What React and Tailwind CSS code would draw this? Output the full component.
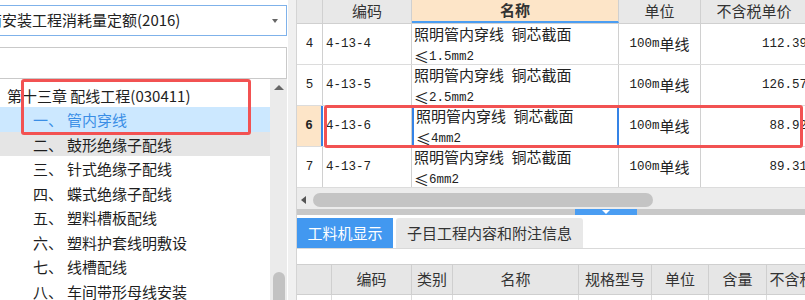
import React from 'react';

const sans = "font-['Noto_Sans_CJK_SC','Noto_Sans',sans-serif]";
const mono = "font-['Liberation_Mono','Noto_Sans_CJK_SC',monospace] text-[12.5px]";

const treeItems = [
    ['二、', '鼓形绝缘子配线'],
    ['三、', '针式绝缘子配线'],
    ['四、', '蝶式绝缘子配线'],
    ['五、', '塑料槽板配线'],
    ['六、', '塑料护套线明敷设'],
    ['七、', '线槽配线'],
    ['八、', '车间带形母线安装'],
];

const rows = [
    { no: '4', code: '4-13-4', spec: '1.5mm2', price: '112.39' },
    { no: '5', code: '4-13-5', spec: '2.5mm2', price: '126.57' },
    { no: '6', code: '4-13-6', spec: '4mm2', price: '88.92', active: true },
    { no: '7', code: '4-13-7', spec: '6mm2', price: '89.31' },
];

const subCols = [
    { w: 'w-[35px]', t: '' },
    { w: 'w-[80px]', t: '编码' },
    { w: 'w-[41px]', t: '类别' },
    { w: 'w-[126px]', t: '名称' },
    { w: 'w-[73px]', t: '规格型号' },
    { w: 'w-[57px]', t: '单位' },
    { w: 'w-[58px]', t: '含量' },
    { w: 'w-[81px]', t: '不含税单价' },
];

function TreePanel() {
    return (
        <div className="relative flex w-[288px] shrink-0 flex-col bg-white pt-[5px]">
            {/* 定额库选择 */}
            <div className="flex h-[31px] w-[287px] items-center justify-between border border-l-0 border-[#7fb2ea] text-[15px] text-[#222]">
                <span className="ml-[-13px] whitespace-nowrap">南安装工程消耗量定额(2016)</span>
                <span className="mr-[8px] h-0 w-0 border-x-[3px] border-t-[4px] border-x-transparent border-t-[#666]" />
            </div>
            <div className="mt-[11px] h-[32px] w-[287px] border border-l-0 border-[#c9c9c9]" />

            <div className="flex min-h-0 flex-1">
                <div className="w-[270px] pt-[3.5px] text-[15px] text-[#1e1e1e]">
                    <div className="flex h-[24.5px] items-center pl-[7px] pt-[2px] whitespace-nowrap">第十三章 配线工程(030411)</div>
                    <div className="flex h-[24.5px] items-center bg-[#cce8ff] pt-[2px] text-[#3a8ee6]">
                        <span className="w-[34px] pl-[33px] box-content">一、</span>
                        <span>管内穿线</span>
                    </div>
                    {treeItems.map(([n, t], i) => (
                        <div key={n} className={`flex h-[24.5px] items-center pt-[2px] whitespace-nowrap ${i === 0 ? 'bg-[#e5e5e5]' : ''}`}>
                            <span className="w-[34px] pl-[33px] box-content">{n}</span>
                            <span>{t}</span>
                        </div>
                    ))}
                </div>
                <div className="relative w-[17px] bg-[#ebebeb]">
                    <div className="mx-[2px] mt-[3px] flex h-[10px] items-center justify-center">
                        <span className="h-0 w-0 border-x-[5px] border-b-[5px] border-x-transparent border-b-[#666]" />
                    </div>
                    <div className="absolute left-[3px] top-[193px] h-[40px] w-[12px] rounded-full bg-[#c2c2c2]" />
                </div>
            </div>

            <div className="pointer-events-none absolute left-[21px] top-[79px] h-[56px] w-[230px] rounded-[3px] border-[3px] border-[#f25252]" />
        </div>
    );
}

function QuotaTable() {
    return (
        <div className="text-[#222]">
            <div className="flex h-[24px] border-b border-[#d0d0d0] bg-[#e8e8e8] text-[15px] text-[#333]">
                <div className="w-[26px] shrink-0 border-r border-[#d0d0d0]" />
                <div className="flex w-[89px] shrink-0 items-center justify-center border-r border-[#d0d0d0]">编码</div>
                <div className="flex w-[207px] shrink-0 items-center justify-center border-r border-b-2 border-[#d0d0d0] border-b-[#4a9df2] bg-[#fde5c8] font-bold">名称</div>
                <div className="flex w-[82px] shrink-0 items-center justify-center border-r border-[#d0d0d0]">单位</div>
                <div className="flex w-[106px] shrink-0 items-center justify-center">不含税单价</div>
            </div>
            {rows.map((r) => (
                <div key={r.no} className="flex h-[41px] border-b border-[#dcdcdc]">
                    <div className={`flex w-[26px] shrink-0 items-center justify-center ${mono} ${r.active ? 'border-r-2 border-[#3583e6] bg-[#fde5c8] font-bold' : 'border-r border-[#d0d0d0]'}`}>
                        {r.no}
                    </div>
                    <div className={`flex w-[89px] shrink-0 items-center border-r border-[#d0d0d0] pl-[3px] ${mono}`}>{r.code}</div>
                    <div className={`w-[207px] shrink-0 pl-[2px] text-[15px] leading-[20px] ${r.active ? 'border-x-2 border-[#3583e6] pl-0' : 'border-r border-[#d0d0d0]'}`}>
                        <div className="whitespace-nowrap">
                            照明管内穿线<span className={mono}> </span>铜芯截面
                        </div>
                        <div className="flex items-center">
                            <span className="inline-block w-[15px] text-center text-[15px]">≤</span>
                            <span className={mono}>{r.spec}</span>
                        </div>
                    </div>
                    <div className="flex w-[82px] shrink-0 items-center justify-center border-r border-[#d0d0d0] text-[15px]">
                        <span className={mono}>100m</span>单线
                    </div>
                    <div className={`flex w-[106px] shrink-0 items-center justify-end ${mono}`}>{r.price}</div>
                </div>
            ))}
        </div>
    );
}

export default function App() {
    return (
        <div className={`flex h-[300px] w-[805px] overflow-hidden bg-white ${sans}`}>
            <TreePanel />
            <div className="w-[8px] shrink-0 bg-[#f0f0f0]" />

            <div className="relative flex min-w-0 flex-1 flex-col overflow-hidden border-l border-[#d4d4d4]">
                <QuotaTable />

                {/* 横向滚动条 */}
                <div className="flex h-[21px] shrink-0 items-start bg-[#ececec] pt-[5px]">
                    <span className="ml-[4px] mt-[3px] h-0 w-0 border-y-[4px] border-r-[5px] border-y-transparent border-r-[#555]" />
                    <div className="ml-[7px] h-[14px] w-[340px] rounded-full bg-[#c4c4c4]" />
                </div>

                {/* 分隔条 */}
                <div className="flex h-[6px] shrink-0 bg-[#c8c8c8]">
                    <div className="ml-[278px] flex w-[62px] items-center justify-center bg-[#4a9df2]">
                        <span className="h-0 w-0 border-x-[4px] border-t-[4px] border-x-transparent border-t-white" />
                    </div>
                </div>

                <div className="flex h-[34px] shrink-0 items-end border-b border-[#d9d9d9] text-[15px]">
                    <div className="flex h-[30px] w-[96px] items-center justify-center bg-[#4298f0] text-white">工料机显示</div>
                    <div className="ml-[3px] flex h-[30px] w-[187px] items-center justify-center rounded-t-[3px] bg-[#e8e8e8] text-[#333]">子目工程内容和附注信息</div>
                </div>

                <div className="h-[15px] shrink-0" />

                <div className="flex h-[31px] shrink-0 border-y border-[#cfcfcf] bg-[#e6e6e6] text-[15px] text-[#333]">
                    {subCols.map((c, i) => (
                        <div key={i} className={`flex ${c.w} shrink-0 items-center justify-center whitespace-nowrap border-r border-[#cfcfcf]`}>{c.t}</div>
                    ))}
                </div>
                <div className="flex h-[30px] shrink-0">
                    {subCols.map((c, i) => (
                        <div key={i} className={`${c.w} shrink-0 border-r border-[#dcdcdc]`} />
                    ))}
                </div>

                <div className="pointer-events-none absolute left-[27px] top-[105px] h-[43px] w-[479px] rounded-[3px] border-[3px] border-[#f25252]" />
            </div>
        </div>
    );
}
